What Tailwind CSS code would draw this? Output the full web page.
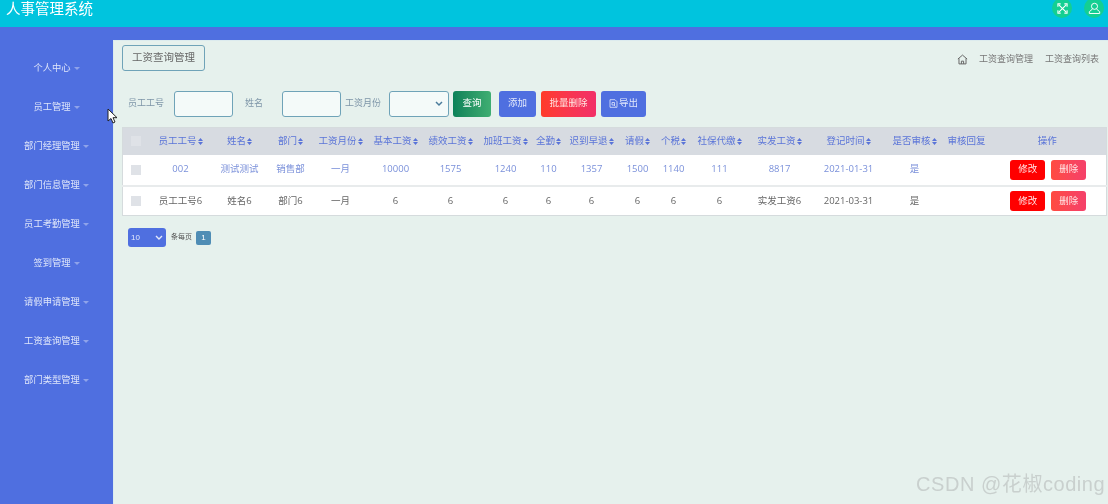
<!DOCTYPE html>
<html lang="zh-CN">

<head>
  <meta charset="UTF-8" />
  <title>人事管理系统</title>
  <script src="https://cdn.jsdelivr.net/npm/@tailwindcss/browser@4"></script>
</head>

<body class="w-[1108px] h-[504px] overflow-hidden bg-[#e6f1ed] font-['Liberation_Sans','Noto_Sans_CJK_SC',sans-serif]">
  <div class="relative w-[1108px] h-[504px] overflow-hidden blur-[0.4px]">
    <!-- 顶部栏 -->
    <header class="h-[27px] bg-[#00c4de] flex items-start justify-between relative">
      <div class="text-white text-[14.5px] leading-[18px] pl-[6px]">人事管理系统</div>
      <div class="flex gap-[12px] pr-[4px] -mt-[2px]">
        <span class="w-[20px] h-[20px] rounded-full bg-[#14cf92] flex items-center justify-center">
          <svg width="11" height="11" viewBox="0 0 12 12" fill="none" stroke="white" stroke-width="1.2">
            <path d="M2 2 10 10M10 2 2 10" />
            <path d="M1 4V1h3M8 1h3v3M11 8v3H8M4 11H1V8" stroke-width="1.2" />
          </svg>
        </span>
        <span class="w-[20px] h-[20px] rounded-full bg-[#14cf92] flex items-center justify-center">
          <svg width="13" height="13" viewBox="0 0 12 12" fill="none" stroke="white" stroke-width="0.9">
            <circle cx="6" cy="4" r="2.8" />
            <path d="M4.2 6.400 1.200 9v1.600h9.600V9L7.800 6.400" />
          </svg>
        </span>
      </div>
    </header>

    <div class="flex h-[477px] bg-[#4f6fe0]">
      <!-- 侧边菜单 -->
      <nav class="w-[113px] shrink-0 pt-[31px] flex flex-col gap-[19px] text-[9.3px] leading-[20px] text-[#dfe6fa]">
        <div class="flex justify-center items-center gap-[3px]">个人中心<i class="w-0 h-0 border-x-[3px] border-x-transparent border-t-[3px] border-t-[#8fa3ea]"></i></div>
        <div class="flex justify-center items-center gap-[3px]">员工管理<i class="w-0 h-0 border-x-[3px] border-x-transparent border-t-[3px] border-t-[#8fa3ea]"></i></div>
        <div class="flex justify-center items-center gap-[3px]">部门经理管理<i class="w-0 h-0 border-x-[3px] border-x-transparent border-t-[3px] border-t-[#8fa3ea]"></i></div>
        <div class="flex justify-center items-center gap-[3px]">部门信息管理<i class="w-0 h-0 border-x-[3px] border-x-transparent border-t-[3px] border-t-[#8fa3ea]"></i></div>
        <div class="flex justify-center items-center gap-[3px]">员工考勤管理<i class="w-0 h-0 border-x-[3px] border-x-transparent border-t-[3px] border-t-[#8fa3ea]"></i></div>
        <div class="flex justify-center items-center gap-[3px]">签到管理<i class="w-0 h-0 border-x-[3px] border-x-transparent border-t-[3px] border-t-[#8fa3ea]"></i></div>
        <div class="flex justify-center items-center gap-[3px]">请假申请管理<i class="w-0 h-0 border-x-[3px] border-x-transparent border-t-[3px] border-t-[#8fa3ea]"></i></div>
        <div class="flex justify-center items-center gap-[3px]">工资查询管理<i class="w-0 h-0 border-x-[3px] border-x-transparent border-t-[3px] border-t-[#8fa3ea]"></i></div>
        <div class="flex justify-center items-center gap-[3px]">部门类型管理<i class="w-0 h-0 border-x-[3px] border-x-transparent border-t-[3px] border-t-[#8fa3ea]"></i></div>
      </nav>

      <!-- 内容区 -->
      <main class="flex-1 mt-[13px] bg-[#e6f1ed] border-l border-t border-[#dcebee] pl-[8px] pt-[4px]">
        <div class="flex items-start justify-between">
          <div class="w-[83px] h-[26px] border border-[#6fa3b8] rounded-[3px] text-[10.5px] text-[#666] flex items-center justify-center">工资查询管理</div>
          <div class="flex items-center text-[9px] text-[#777] pr-[9px] pt-[8px] gap-[12px]">
            <svg width="11" height="11" viewBox="0 0 10 10" fill="none" stroke="#666" stroke-width="0.9">
              <path d="M.8 4.600 5 1l4.200 3.600M1.800 4v5h6.400V4M4 9V6.500h2V9" />
            </svg>
            <span class="ml-[-1px]">工资查询管理</span>
            <span>工资查询列表</span>
          </div>
        </div>

        <div class="flex items-center h-[27px] mt-[19px] text-[9px] text-[#7d95a8]">
          <span class="ml-[6px] w-[46px]">员工工号</span>
          <span class="w-[59px] h-[26px] bg-[#f4faf9] border border-[#6fa3b8] rounded-[3px]"></span>
          <span class="ml-[12px] w-[37px]">姓名</span>
          <span class="w-[59px] h-[26px] bg-[#f4faf9] border border-[#6fa3b8] rounded-[3px]"></span>
          <span class="ml-[4px] w-[44px]">工资月份</span>
          <span class="w-[60px] h-[26px] bg-[#f4faf9] border border-[#6fa3b8] rounded-[3px] flex items-center justify-end pr-[5px]">
            <svg width="8" height="6" viewBox="0 0 8 6" fill="none" stroke="#4b7c9c" stroke-width="1.5"><path d="M1 1l3 3 3-3" /></svg>
          </span>
          <span class="ml-[4px] w-[38px] h-[26px] rounded-[3px] bg-gradient-to-r from-[#0a8259] to-[#3fae72] text-white text-[9.500px] flex items-center justify-center">查询</span>
          <span class="ml-[8px] w-[37px] h-[26px] rounded-[3px] bg-[#4f6fe0] text-[#e3e9fb] text-[9.500px] flex items-center justify-center">添加</span>
          <span class="ml-[5px] w-[55px] h-[26px] rounded-[3px] bg-gradient-to-r from-[#ff3b28] to-[#f22f68] text-[#ffe5e0] text-[9.500px] flex items-center justify-center">批量删除</span>
          <span class="ml-[5px] w-[45px] h-[26px] rounded-[3px] bg-[#4f6fe0] text-[#e3e9fb] text-[9.500px] flex items-center justify-center gap-[1px]">
            <svg width="9" height="9" viewBox="0 0 9 9" fill="none" stroke="#e3e9fb" stroke-width="0.8"><path d="M1 .7h5l2 2v5.600H1zM3 3.500h2.500V6H3zM5 6l1.500 1.500" /></svg>导出
          </span>
        </div>

        <table class="mt-[10px] w-[985px] table-fixed border-collapse border border-[#d5dbdd] text-[9.500px] text-center font-['Open_Sans','Noto_Sans_CJK_SC',sans-serif]">
          <colgroup>
            <col class="w-[26px]" /><col class="w-[64px]" /><col class="w-[54px]" /><col class="w-[48px]" /><col class="w-[52px]" /><col class="w-[58px]" /><col class="w-[52px]" /><col class="w-[58px]" /><col class="w-[28px]" /><col class="w-[58px]" /><col class="w-[34px]" /><col class="w-[38px]" /><col class="w-[54px]" /><col class="w-[66px]" /><col class="w-[72px]" /><col class="w-[60px]" /><col class="w-[44px]" /><col />
          </colgroup>
          <thead class="bg-[#d7dbe1] text-[#5a74d8]">
            <tr class="h-[27px]">
              <th class="font-normal"><span class="block w-[10px] h-[10px] ml-[8px] bg-[#dfe2e7]"></span></th>
              <th class="font-normal whitespace-nowrap">员工工号<svg class="inline-block ml-[1px]" width="5" height="7" viewBox="0 0 5 7" fill="#5a74d8"><path d="M0 3 2.500 0 5 3zM0 4h5L2.500 7z" /></svg></th>
              <th class="font-normal whitespace-nowrap">姓名<svg class="inline-block ml-[1px]" width="5" height="7" viewBox="0 0 5 7" fill="#5a74d8"><path d="M0 3 2.500 0 5 3zM0 4h5L2.500 7z" /></svg></th>
              <th class="font-normal whitespace-nowrap">部门<svg class="inline-block ml-[1px]" width="5" height="7" viewBox="0 0 5 7" fill="#5a74d8"><path d="M0 3 2.500 0 5 3zM0 4h5L2.500 7z" /></svg></th>
              <th class="font-normal whitespace-nowrap">工资月份<svg class="inline-block ml-[1px]" width="5" height="7" viewBox="0 0 5 7" fill="#5a74d8"><path d="M0 3 2.500 0 5 3zM0 4h5L2.500 7z" /></svg></th>
              <th class="font-normal whitespace-nowrap">基本工资<svg class="inline-block ml-[1px]" width="5" height="7" viewBox="0 0 5 7" fill="#5a74d8"><path d="M0 3 2.500 0 5 3zM0 4h5L2.500 7z" /></svg></th>
              <th class="font-normal whitespace-nowrap">绩效工资<svg class="inline-block ml-[1px]" width="5" height="7" viewBox="0 0 5 7" fill="#5a74d8"><path d="M0 3 2.500 0 5 3zM0 4h5L2.500 7z" /></svg></th>
              <th class="font-normal whitespace-nowrap">加班工资<svg class="inline-block ml-[1px]" width="5" height="7" viewBox="0 0 5 7" fill="#5a74d8"><path d="M0 3 2.500 0 5 3zM0 4h5L2.500 7z" /></svg></th>
              <th class="font-normal whitespace-nowrap">全勤<svg class="inline-block ml-[1px]" width="5" height="7" viewBox="0 0 5 7" fill="#5a74d8"><path d="M0 3 2.500 0 5 3zM0 4h5L2.500 7z" /></svg></th>
              <th class="font-normal whitespace-nowrap">迟到早退<svg class="inline-block ml-[1px]" width="5" height="7" viewBox="0 0 5 7" fill="#5a74d8"><path d="M0 3 2.500 0 5 3zM0 4h5L2.500 7z" /></svg></th>
              <th class="font-normal whitespace-nowrap">请假<svg class="inline-block ml-[1px]" width="5" height="7" viewBox="0 0 5 7" fill="#5a74d8"><path d="M0 3 2.500 0 5 3zM0 4h5L2.500 7z" /></svg></th>
              <th class="font-normal whitespace-nowrap">个税<svg class="inline-block ml-[1px]" width="5" height="7" viewBox="0 0 5 7" fill="#5a74d8"><path d="M0 3 2.500 0 5 3zM0 4h5L2.500 7z" /></svg></th>
              <th class="font-normal whitespace-nowrap">社保代缴<svg class="inline-block ml-[1px]" width="5" height="7" viewBox="0 0 5 7" fill="#5a74d8"><path d="M0 3 2.500 0 5 3zM0 4h5L2.500 7z" /></svg></th>
              <th class="font-normal whitespace-nowrap">实发工资<svg class="inline-block ml-[1px]" width="5" height="7" viewBox="0 0 5 7" fill="#5a74d8"><path d="M0 3 2.500 0 5 3zM0 4h5L2.500 7z" /></svg></th>
              <th class="font-normal whitespace-nowrap">登记时间<svg class="inline-block ml-[1px]" width="5" height="7" viewBox="0 0 5 7" fill="#5a74d8"><path d="M0 3 2.500 0 5 3zM0 4h5L2.500 7z" /></svg></th>
              <th class="font-normal whitespace-nowrap">是否审核<svg class="inline-block ml-[1px]" width="5" height="7" viewBox="0 0 5 7" fill="#5a74d8"><path d="M0 3 2.500 0 5 3zM0 4h5L2.500 7z" /></svg></th>
              <th class="font-normal whitespace-nowrap">审核回复</th>
              <th class="font-normal whitespace-nowrap">操作</th>
            </tr>
          </thead>
          <tbody class="bg-white">
            <tr class="h-[31px] border-b-2 border-[#e8ebec] text-[#7a90da]">
              <td><span class="block w-[10px] h-[10px] ml-[8px] bg-[#dfe2e7]"></span></td>
              <td>002</td><td>测试测试</td><td>销售部</td><td>一月</td><td>10000</td><td>1575</td><td>1240</td><td>110</td><td>1357</td><td>1500</td><td>1140</td><td>111</td><td>8817</td><td>2021-01-31</td><td>是</td><td></td>
              <td>
                <div class="flex justify-center gap-[6px] pl-[2px]">
                  <span class="w-[35px] h-[20px] rounded-[3px] bg-[#ff0000] text-[9.500px] text-[#ffe5e5] flex items-center justify-center">修改</span>
                  <span class="w-[35px] h-[20px] rounded-[3px] bg-gradient-to-r from-[#ff4b40] to-[#f5406a] text-[9.500px] text-[#ffe5e5] flex items-center justify-center">删除</span>
                </div>
              </td>
            </tr>
            <tr class="h-[30px] text-[#666]">
              <td><span class="block w-[10px] h-[10px] ml-[8px] bg-[#dfe2e7]"></span></td>
              <td>员工工号6</td><td>姓名6</td><td>部门6</td><td>一月</td><td>6</td><td>6</td><td>6</td><td>6</td><td>6</td><td>6</td><td>6</td><td>6</td><td>实发工资6</td><td>2021-03-31</td><td>是</td><td></td>
              <td>
                <div class="flex justify-center gap-[6px] pl-[2px]">
                  <span class="w-[35px] h-[20px] rounded-[3px] bg-[#ff0000] text-[9.500px] text-[#ffe5e5] flex items-center justify-center">修改</span>
                  <span class="w-[35px] h-[20px] rounded-[3px] bg-gradient-to-r from-[#ff4b40] to-[#f5406a] text-[9.500px] text-[#ffe5e5] flex items-center justify-center">删除</span>
                </div>
              </td>
            </tr>
          </tbody>
        </table>

        <!-- 分页 -->
        <div class="flex items-center mt-[12px] ml-[6px]">
          <span class="w-[38px] h-[19px] rounded-[3px] bg-[#4f6fe0] text-[#e3e9fb] text-[8px] flex items-center justify-between px-[3px]">10
            <svg width="8" height="6" viewBox="0 0 8 6" fill="none" stroke="#e3e9fb" stroke-width="1.4"><path d="M1 1l3 3 3-3" /></svg>
          </span>
          <span class="ml-[5px] text-[7px] text-[#555]">条每页</span>
          <span class="ml-[4px] w-[15px] h-[14px] rounded-[2px] bg-[#4f8db5] text-[8px] text-white flex items-center justify-center">1</span>
        </div>
      </main>
    </div>

    <!-- 鼠标指针 -->
    <svg class="absolute left-[107px] top-[108px]" width="12" height="17" viewBox="0 0 12 17">
      <path d="M1 1v12l3-2.500 2 4.500 2-1-2-4.300h4z" fill="#fff" stroke="#222" stroke-width="1" />
    </svg>

    <!-- 水印 -->
    <div class="absolute left-[916px] top-[471px] text-[20px] leading-[26px] tracking-[0.55px] text-[#c9d0ce] whitespace-nowrap">CSDN @花椒coding</div>
  </div>
</body>

</html>
